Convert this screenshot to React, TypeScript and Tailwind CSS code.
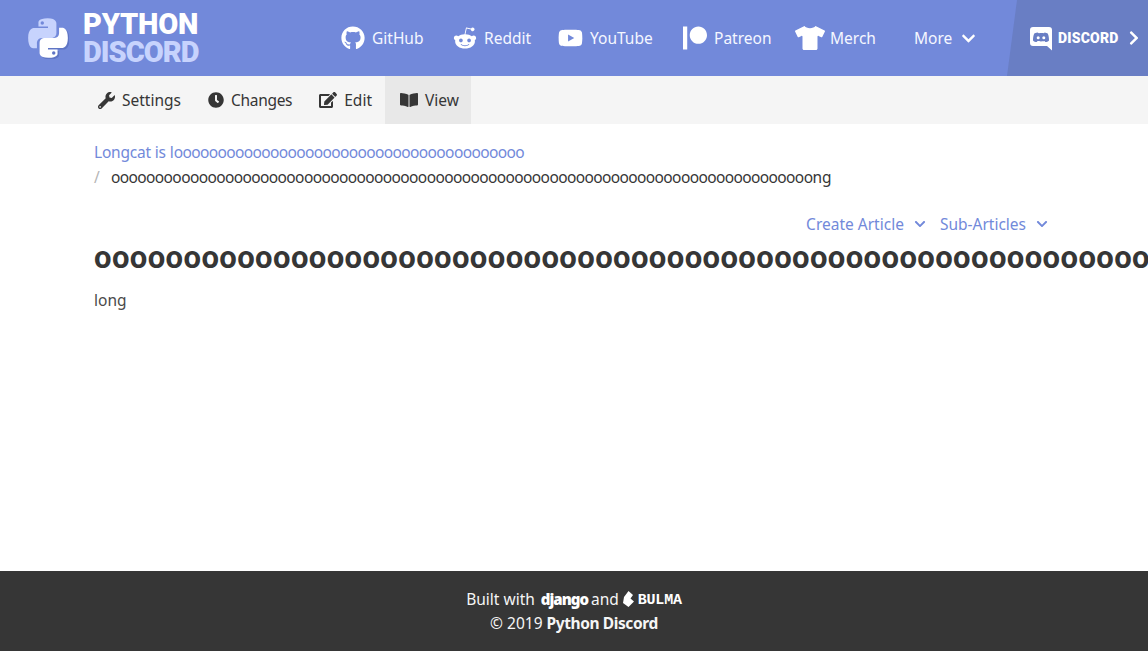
import {
  FaBookOpen,
  FaChevronDown,
  FaChevronRight,
  FaClock,
  FaEdit,
  FaGithub,
  FaPatreon,
  FaRedditAlien,
  FaTshirt,
  FaWrench,
  FaYoutube,
} from "react-icons/fa";

const navLinks = [
  { label: "GitHub", icon: FaGithub, box: "w-[24px]", size: 24, className: "w-[112px]" },
  { label: "Reddit", icon: FaRedditAlien, box: "w-[24px]", size: 24, className: "w-[105px]" },
  { label: "YouTube", icon: FaYoutube, box: "w-[25px]", size: 30, className: "w-[124px]" },
  { label: "Patreon", icon: FaPatreon, box: "w-[25px]", size: 24, className: "w-[113px]" },
  { label: "Merch", icon: FaTshirt, box: "w-[30px]", size: 30, className: "w-[119px]", gap: "ml-[5px]" },
];

const tabs = [
  { label: "Settings", icon: FaWrench, size: 17, className: "" },
  { label: "Changes", icon: FaClock, size: 16, className: "tracking-[-0.3px]" },
  { label: "Edit", icon: FaEdit, size: 18, className: "pr-[13px]" },
  { label: "View", icon: FaBookOpen, size: 18, className: "bg-[#e8e8e8]" },
];

const PythonLogo = () => (
  <svg width="42" height="42" viewBox="0 0 110 110" className="shrink-0">
    <path
      fill="#5f75c4"
      transform="translate(4 4)"
      d="M56 107c25 0 24-11 24-11V85H55v-4h36s16 2 16-26-14-27-14-27h-9v13s1 14-14 14H46s-13 0-13 13v25s-2 14 23 14z"
    />
    <path
      fill="#c7d3fd"
      d="M54 3c-25 0-24 11-24 11v11h25v4H19S3 27 3 55s14 27 14 27h9V69s-1-14 14-14h24s13 0 13-13V17S79 3 54 3zM40 11a4.500 4.500 0 1 1 0 9 4.500 4.500 0 0 1 0-9z"
    />
    <path
      fill="#ffffff"
      d="M56 107c25 0 24-11 24-11V85H55v-4h36s16 2 16-26-14-27-14-27h-9v13s1 14-14 14H46s-13 0-13 13v25s-2 14 23 14zm14-8a4.500 4.500 0 1 1 0-9 4.500 4.500 0 0 1 0 9z"
    />
  </svg>
);

// old square Discord badge, face is knocked out in the bar colour
const DiscordBadge = () => (
  <svg width="22" height="25" viewBox="0 0 22 25" className="shrink-0">
    <path fill="#ffffff" d="M3 1h16a3 3 0 0 1 3 3v20.500l-5-4.500H3a3 3 0 0 1-3-3V4a3 3 0 0 1 3-3z" />
    <path
      fill="#697ec4"
      d="M7.500 6.500c-1.500.2-2.700.7-3.200 1.100C3.300 9.500 3 12 3 14.500c1 1 2.300 1.500 3.700 1.600l.7-1c1 .4 6.200.4 7.200 0l.7 1c1.400-.1 2.700-.6 3.700-1.600 0-2.500-.3-5-1.300-6.900-.5-.4-1.700-.9-3.200-1.100l-.4.8c-1.400-.3-3.800-.3-5.200 0z"
    />
    <circle cx="8.200" cy="11.700" r="1.500" fill="#ffffff" />
    <circle cx="13.800" cy="11.700" r="1.500" fill="#ffffff" />
  </svg>
);

const BulmaMark = () => (
  <svg width="11" height="16" viewBox="0 0 11 16" className="shrink-0">
    <path fill="#ffffff" d="M5.500 0 10 4 7.500 7.500 11 10.500 5.500 16 0 12 1 6z" />
  </svg>
);

export default function App() {
  return (
    <div className="flex h-[651px] flex-col overflow-hidden bg-white font-['Noto_Sans',sans-serif] text-[15.5px] text-[#363636]">
      <header className="flex h-[76px] shrink-0 bg-[#7289da] text-white">
        <div className="flex w-[341px] shrink-0 items-center pl-[27px]">
          <PythonLogo />
          <div className="ml-[14px] font-['Roboto',sans-serif] text-[29px] leading-[28px] font-black">
            <div className="tracking-[-0.2px]">PYTHON</div>
            <div className="tracking-[-1px] text-[#c7d3fd]">DISCORD</div>
          </div>
        </div>
        <nav className="flex flex-1 items-center">
          {navLinks.map((link) => (
            <a key={link.label} className={`flex items-center ${link.className}`}>
              <span className={`flex justify-center ${link.box}`}>
                <link.icon size={link.size} />
              </span>
              <span className={`${link.gap ?? "ml-[7px]"} pt-px text-[#f5f7ff]`}>{link.label}</span>
            </a>
          ))}
          <a className="flex items-center">
            <span className="pt-px text-[#f5f7ff]">More</span>
            <FaChevronDown size={15} className="ml-[9px]" />
          </a>
        </nav>
        <a className="flex w-[141px] shrink-0 items-center bg-[#697ec4] pl-[23px] [clip-path:polygon(10px_0,100%_0,100%_100%,0_100%)]">
          <DiscordBadge />
          <span className="ml-[6px] font-['Roboto',sans-serif] text-[14px] font-black tracking-[0.2px]">DISCORD</span>
          <FaChevronRight size={16} className="ml-[7px]" />
        </a>
      </header>

      <div className="flex h-12 shrink-0 bg-[#f5f5f5] pl-[83px]">
        {tabs.map((tab) => (
          <a key={tab.label} className={`flex items-center pr-3 pl-[15px] ${tab.className}`}>
            <tab.icon size={tab.size} />
            <span className="ml-[7px] pt-px">{tab.label}</span>
          </a>
        ))}
      </div>

      <main className="min-h-0 flex-1 pt-4 pl-[94px]">
        <div className="leading-[25px]">
          <a className="block text-[#7289da]">
            <span className="tracking-[-0.2px]">Longcat is </span>l
            <span className="tracking-[-0.62px]">{"o".repeat(40)}</span>
          </a>
          <div className="flex">
            <span className="w-[17px] text-[#b5b5b5]">/</span>
            <span>
              <span className="tracking-[-0.61px]">{"o".repeat(80)}</span>ng
            </span>
          </div>
        </div>
        <div className="mt-[22px] flex w-[954px] justify-end leading-6 text-[#7289da]">
          <a className="flex items-center">
            Create Article
            <FaChevronDown size={12} className="ml-[10px]" />
          </a>
          <a className="ml-[14px] flex items-center">
            Sub-Articles
            <FaChevronDown size={12} className="ml-[10px]" />
          </a>
        </div>
        <h1 className="mt-[2px] font-['Roboto',sans-serif] text-[31px] leading-[40px] font-bold tracking-[0.4px] whitespace-nowrap">
          {"o".repeat(60)}
        </h1>
        <p className="mt-[10px] leading-6 text-[#4a4a4a]">long</p>
      </main>

      <footer className="h-20 shrink-0 bg-[#363636] pt-4 text-center leading-6 text-[#f5f5f5]">
        <div className="flex h-6 items-center justify-center">
          Built with
          <span className="mr-[3px] ml-[6px] text-[15px] leading-6 font-black tracking-[-1px] text-white">django</span>
          and
          <span className="mr-[4px] ml-[4px] flex">
            <BulmaMark />
          </span>
          <span className="pt-[3px] font-['Liberation_Mono',monospace] text-[15px] leading-[18px] font-bold tracking-[-0.2px] text-white">BULMA</span>
        </div>
        <div>
          © 2019 <b className="font-bold tracking-[-0.4px]">Python Discord</b>
        </div>
      </footer>
    </div>
  );
}
